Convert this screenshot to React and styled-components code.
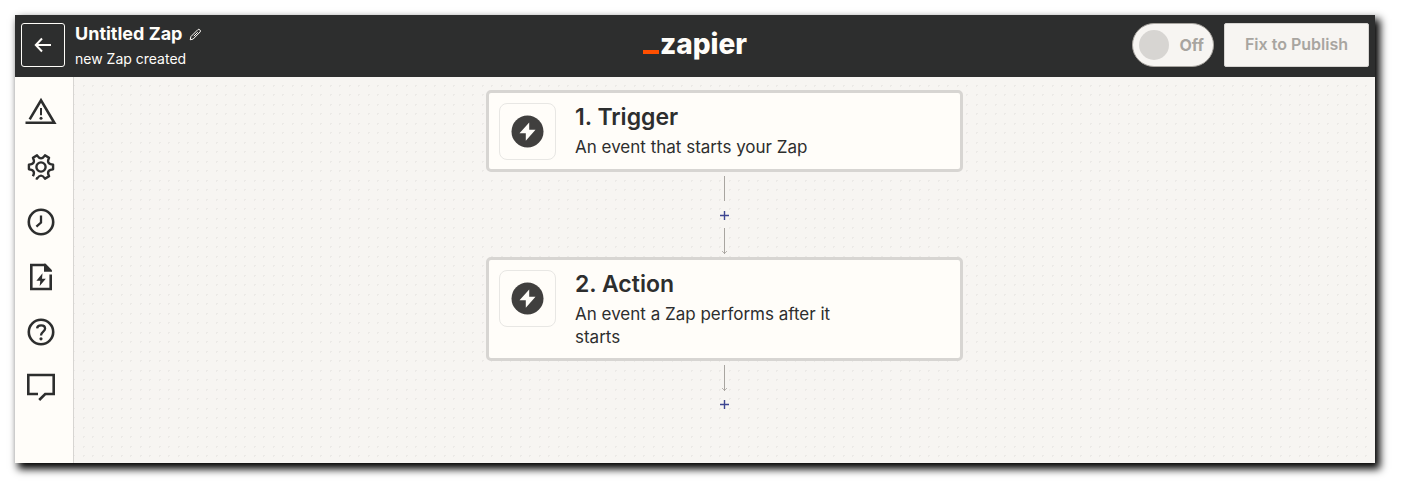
import React, {useState} from "react";
import styled, {createGlobalStyle} from "styled-components";

const GlobalStyle = createGlobalStyle`
  *, *::before, *::after {
    box-sizing: border-box;
  }

  body {
    margin: 0;
    background: #fff;
    color: #2d2e2e;
    font-family: Inter, "Liberation Sans", sans-serif;
  }

  button {
    font-family: inherit;
    color: inherit;
    cursor: pointer;
  }
`

const Editor = styled.div`
  display: flex;
  flex-direction: column;
  min-height: calc(100vh - 42px);
  margin: 15px 27px 27px 15px;
  box-shadow: 4px 5px 8px 1px #000;
`

const Header = styled.header`
  display: grid;
  grid-template-columns: 1fr auto 1fr;
  align-items: start;
  padding: 8px 6px;
  background: #2d2e2e;
  color: #fffdf9;
`

const HeaderLeft = styled.div`
  display: flex;
  align-items: flex-start;
  gap: 10px;
`

const HeaderRight = styled.div`
  display: flex;
  justify-content: flex-end;
  gap: 10px;
`

const BackButton = styled.button`
  display: flex;
  align-items: center;
  justify-content: center;
  width: 44px;
  height: 44px;
  padding: 0;
  border: 1px solid #fffdf9;
  border-radius: 3px;
  background: transparent;
  color: #fffdf9;
`

const TitleRow = styled.div`
  display: flex;
  align-items: center;
  gap: 7px;
`

const Title = styled.h1`
  margin: 0;
  font-size: 18px;
  line-height: 22px;
  font-weight: 700;
`

const RenameButton = styled.button`
  display: flex;
  padding: 0;
  border: 0;
  background: transparent;
  color: #fffdf9;
`

const Status = styled.p`
  margin: 4px 0 0;
  font-size: 14px;
  line-height: 20px;
`

const Logo = styled.a`
  display: flex;
  align-items: baseline;
  gap: 1px;
  color: #fffdf9;
  font-size: 28px;
  line-height: 42px;
  font-weight: 800;
  text-decoration: none;

  &::before {
    content: "";
    width: 16px;
    height: 4px;
    background: #ff4f00;
  }
`

const Toggle = styled.label`
  display: flex;
  align-items: center;
  justify-content: space-between;
  width: 82px;
  height: 44px;
  padding: 0 9px 0 6px;
  border: 1px solid #a8a5a0;
  border-radius: 22px;
  background: #f7f5f2;
  color: #a8a5a0;
  font-size: 16px;
  font-weight: 700;
`

const ToggleInput = styled.input`
  appearance: none;
  width: 30px;
  height: 30px;
  margin: 0;
  border-radius: 50%;
  background: ${props => props.checked ? "#0f884e" : "#d7d5d2"};
`

const PublishButton = styled.button`
  height: 44px;
  padding: 0 20px 2px;
  border: 1px solid #d7d5d2;
  border-radius: 2px;
  background: #f7f5f2;
  color: #a8a5a0;
  font-size: 16px;
  font-weight: 600;
`

const Body = styled.div`
  display: flex;
  flex: 1;
`

const Sidebar = styled.nav`
  display: flex;
  flex-direction: column;
  flex-shrink: 0;
  width: 59px;
  padding: 7px 10px;
  border-right: 1px solid #d7d5d2;
  background: #fffdf9;
`

const SidebarButton = styled.button`
  display: flex;
  align-items: center;
  width: 32px;
  height: 55px;
  padding: 0;
  border: 0;
  background: transparent;
`

const dot = "radial-gradient(circle, #eceae7 1px, transparent 1px)"

const Canvas = styled.main`
  display: flex;
  flex: 1;
  flex-direction: column;
  align-items: center;
  padding: 13px 16px 24px;
  background-color: #f7f5f2;
  background-image: ${dot}, ${dot}, ${dot}, ${dot};
  background-size: 19px 19px;
  background-position: 0 -1px, 9px -1px, 0 8px, 9px 8px;
`

const Card = styled.button`
  display: flex;
  align-items: flex-start;
  gap: 19px;
  width: 100%;
  max-width: 477px;
  padding: 10px 92px 9px 10px;
  border: 3px solid #d7d5d2;
  border-radius: 5px;
  background: #fffdf9;
  text-align: left;
`

const CardIcon = styled.span`
  display: flex;
  align-items: center;
  justify-content: center;
  flex-shrink: 0;
  width: 57px;
  height: 57px;
  border: 1px solid #e8e7e4;
  border-radius: 8px;
`

const CardText = styled.span`
  display: flex;
  flex-direction: column;
  gap: 5px;
`

const CardTitle = styled.span`
  font-size: 23px;
  line-height: 28px;
  font-weight: 600;
`

const CardDescription = styled.span`
  font-size: 17px;
  line-height: 23px;
`

const Connector = styled.div`
  display: flex;
  flex-direction: column;
  align-items: center;
  padding: 4px 0 3px;
`

const AddButton = styled.button`
  display: flex;
  align-items: center;
  justify-content: center;
  width: 27px;
  height: 26px;
  padding: 0;
  border: 0;
  background: transparent;
  color: #3d4592;
`

// Every sidebar icon is drawn around 0,0
function Icon({children}) {
    return (
        <svg width="32" height="32" viewBox="-16 -16 32 32" fill="none"
             stroke="currentColor" strokeWidth="2.6" aria-hidden="true">
            {children}
        </svg>
    )
}

const polar = (deg, r) => {
    const rad = deg * Math.PI / 180
    return `${(r * Math.cos(rad)).toFixed(2)} ${(r * Math.sin(rad)).toFixed(2)}`
}

// Six teeth, left open at the bottom left one
const gearPath = () => {
    let d = `M${polar(131, 12.3)}`
    for (let deg = 150; deg < 510; deg += 60) {
        d += `Q${polar(deg, 5.6)} ${polar(deg + 19, 12.3)}`
        d += `L${polar(deg === 450 ? 475 : deg + 41, 12.3)}`
    }
    return d
}

const sidebarItems = [
    {
        label: "Alerts",
        icon: <>
            <path d="M-15.5 10.8H13.3L0 -11.6L-11.3 7.4"/>
            <path d="M0 -4V3.2" strokeWidth="2"/>
            <circle cy="6.2" r="1.5" fill="currentColor" stroke="none"/>
        </>
    },
    {
        label: "Settings",
        icon: <>
            <path d={gearPath()} strokeWidth="2.4" strokeLinejoin="round"/>
            <circle r="4.6" strokeWidth="2.4"/>
        </>
    },
    {
        label: "History",
        icon: <>
            <circle r="12.2"/>
            <path d="M0 -6.5V0.5L-4.6 4.6" strokeWidth="2.3"/>
        </>
    },
    {
        label: "Zap details",
        icon: <>
            <path d="M9.7 -2.5V12H-9.7V-12H4.5"/>
            <path d="M3 -13.3H4.7L11 -6.8V-5.2H3Z" fill="currentColor" stroke="none"/>
            <path d="M1.5 -3.7L-4.6 3.7H-0.7L-1.3 9L4.8 1.8H1Z" fill="currentColor" stroke="none"/>
        </>
    },
    {
        label: "Help",
        icon: <>
            <circle r="12.2"/>
            <path d="M-3.9 -3.6C-3.6 -7.6 4.1 -7.6 4.1 -3.4C4.1 -0.4 0 -0.4 0 3.4" strokeWidth="2.3"/>
            <circle cy="6.8" r="1.6" fill="currentColor" stroke="none"/>
        </>
    },
    {
        label: "Feedback",
        icon: <path d="M-3 7H-12.7V-12H12.7V7H4.2L-1.8 13"/>
    }
]

function Step({title, description}) {
    return (
        <Card type="button">
            <CardIcon>
                <svg width="33" height="33" viewBox="-16.5 -16.5 33 33" aria-hidden="true">
                    <circle r="16" fill="#403f3e"/>
                    <path d="M1.7 -9L-8 1.7H-1.7V9.3L8 -1.7H1.7Z" fill="#fffdf9"/>
                </svg>
            </CardIcon>
            <CardText>
                <CardTitle>{title}</CardTitle>
                <CardDescription>{description}</CardDescription>
            </CardText>
        </Card>
    )
}

function Line({arrow}) {
    return (
        <svg width="7" height="26" viewBox="0 0 7 26" fill="none" stroke="#a8a5a0" aria-hidden="true">
            <path d={arrow ? "M3.5 0V26" : "M3.5 0V25"}/>
            {arrow && <path d="M1 23L3.5 25.5L6 23" strokeWidth="0.8"/>}
        </svg>
    )
}

function AddStep() {
    return (
        <AddButton type="button" aria-label="Add step">
            <svg width="9" height="9" viewBox="0 0 9 9" stroke="currentColor" strokeWidth="1.4" aria-hidden="true">
                <path d="M4.5 0V9M0 4.5H9"/>
            </svg>
        </AddButton>
    )
}

export default function App() {
    const [on, setOn] = useState(false)

    return (
        <>
            <GlobalStyle/>
            <Editor>
                <Header>
                    <HeaderLeft>
                        <BackButton type="button" aria-label="Back">
                            <svg width="18" height="16" viewBox="0 0 18 16" fill="none"
                                 stroke="currentColor" strokeWidth="2" aria-hidden="true">
                                <path d="M17 8H2M8 1.5L1.8 8L8 14.5"/>
                            </svg>
                        </BackButton>
                        <div>
                            <TitleRow>
                                <Title>Untitled Zap</Title>
                                <RenameButton type="button" aria-label="Rename">
                                    <svg width="13" height="13" viewBox="0 0 13 13" fill="none"
                                         stroke="currentColor" aria-hidden="true">
                                        <path d="M1.2 11.8L1.9 8.6L8.9 1.6Q9.8 0.9 10.8 1.8Q12 2.9 11.2 3.9L4.2 11ZM4.8 8.2L8.8 4.2"/>
                                    </svg>
                                </RenameButton>
                            </TitleRow>
                            <Status>new Zap created</Status>
                        </div>
                    </HeaderLeft>
                    <Logo href="#">zapier</Logo>
                    <HeaderRight>
                        <Toggle>
                            <ToggleInput type="checkbox" role="switch" checked={on}
                                         onChange={(evt) => setOn(evt.target.checked)}/>
                            {on ? "On" : "Off"}
                        </Toggle>
                        <PublishButton type="button">Fix to Publish</PublishButton>
                    </HeaderRight>
                </Header>
                <Body>
                    <Sidebar>
                        {sidebarItems.map(item => (
                            <SidebarButton key={item.label} type="button" aria-label={item.label}>
                                <Icon>{item.icon}</Icon>
                            </SidebarButton>
                        ))}
                    </Sidebar>
                    <Canvas>
                        <Step title="1. Trigger" description="An event that starts your Zap"/>
                        <Connector>
                            <Line/>
                            <AddStep/>
                            <Line arrow/>
                        </Connector>
                        <Step title="2. Action" description="An event a Zap performs after it starts"/>
                        <Connector>
                            <Line arrow/>
                            <AddStep/>
                        </Connector>
                    </Canvas>
                </Body>
            </Editor>
        </>
    )
}
